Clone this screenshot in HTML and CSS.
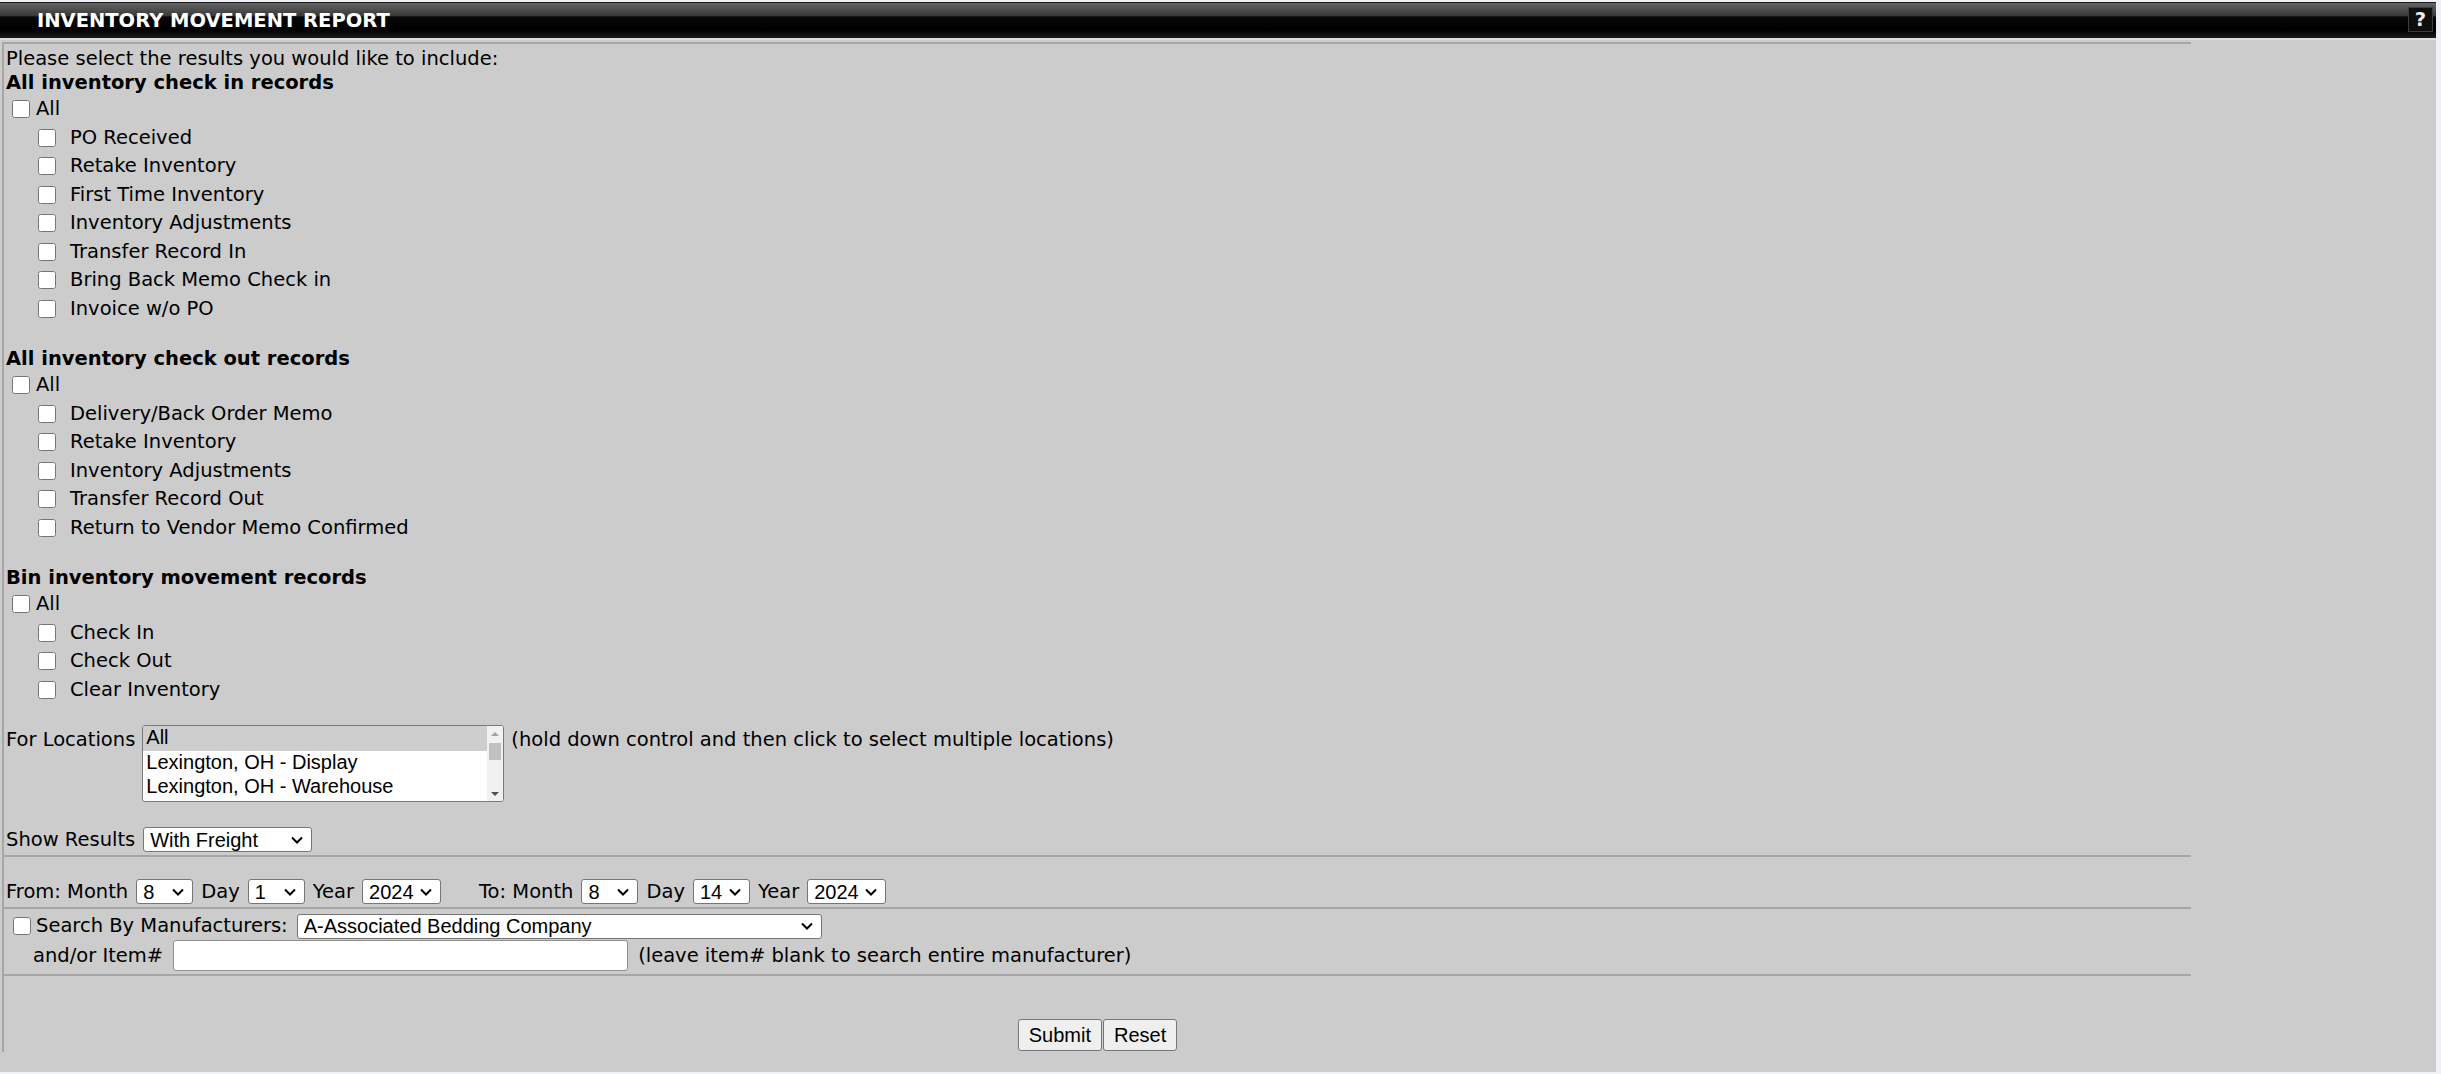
FILE: index.html
```html
<!DOCTYPE html>
<html lang="en">
<head>
    <meta charset="UTF-8">
    <meta name="viewport" content="width=device-width, initial-scale=1.0">
    <title>Inventory Movement Report</title>
    <link rel="stylesheet" href="styles.css">
</head>
<body>
    <div class="page">
        <!-- Title bar -->
        <header class="title-bar">
            <h1>INVENTORY MOVEMENT REPORT</h1>
            <a href="#" class="help-btn" title="Help">?</a>
        </header>

        <div class="panel">
            <form class="report-form">
                <!-- Record types -->
                <section class="form-row record-types">
                    <div class="intro">Please select the results you would like to include:</div>

                    <div class="group-title first">All inventory check in records</div>
                    <label class="check-all"><input type="checkbox" name="in_all">All</label>
                    <ul class="check-list">
                        <li><label><input type="checkbox" name="in_po"><span>PO Received</span></label></li>
                        <li><label><input type="checkbox" name="in_retake"><span>Retake Inventory</span></label></li>
                        <li><label><input type="checkbox" name="in_first"><span>First Time Inventory</span></label></li>
                        <li><label><input type="checkbox" name="in_adjust"><span>Inventory Adjustments</span></label></li>
                        <li><label><input type="checkbox" name="in_transfer"><span>Transfer Record In</span></label></li>
                        <li><label><input type="checkbox" name="in_bringback"><span>Bring Back Memo Check in</span></label></li>
                        <li><label><input type="checkbox" name="in_invoice"><span>Invoice w/o PO</span></label></li>
                    </ul>

                    <div class="group-title">All inventory check out records</div>
                    <label class="check-all"><input type="checkbox" name="out_all">All</label>
                    <ul class="check-list">
                        <li><label><input type="checkbox" name="out_delivery"><span>Delivery/Back Order Memo</span></label></li>
                        <li><label><input type="checkbox" name="out_retake"><span>Retake Inventory</span></label></li>
                        <li><label><input type="checkbox" name="out_adjust"><span>Inventory Adjustments</span></label></li>
                        <li><label><input type="checkbox" name="out_transfer"><span>Transfer Record Out</span></label></li>
                        <li><label><input type="checkbox" name="out_rtv"><span>Return to Vendor Memo Confirmed</span></label></li>
                    </ul>

                    <div class="group-title">Bin inventory movement records</div>
                    <label class="check-all"><input type="checkbox" name="bin_all">All</label>
                    <ul class="check-list">
                        <li><label><input type="checkbox" name="bin_in"><span>Check In</span></label></li>
                        <li><label><input type="checkbox" name="bin_out"><span>Check Out</span></label></li>
                        <li><label><input type="checkbox" name="bin_clear"><span>Clear Inventory</span></label></li>
                    </ul>

                    <div class="locations">
                        <span class="field-label">For Locations</span>
                        <div class="location-list" role="listbox" aria-multiselectable="true">
                            <div class="loc-options">
                                <div class="loc-option selected" role="option">All</div>
                                <div class="loc-option" role="option">Lexington, OH - Display</div>
                                <div class="loc-option" role="option">Lexington, OH - Warehouse</div>
                            </div>
                            <!-- scrollbar -->
                            <div class="list-scroll" aria-hidden="true">
                                <span class="sb-up"></span>
                                <span class="sb-track"><span class="sb-thumb"></span></span>
                                <span class="sb-down"></span>
                            </div>
                        </div>
                        <span class="field-label">(hold down control and then click to select multiple locations)</span>
                    </div>

                    <div class="show-results">
                        <span>Show Results</span>
                        <select class="freight-select" name="freight">
                            <option>With Freight</option>
                            <option>Without Freight</option>
                        </select>
                    </div>
                </section>

                <!-- Date range -->
                <section class="form-row date-range">
                    <span>From: Month</span>
                    <select class="sel-small" name="from_month">
                        <option>1</option><option>2</option><option>3</option><option>4</option><option>5</option><option>6</option>
                        <option>7</option><option selected>8</option><option>9</option><option>10</option><option>11</option><option>12</option>
                    </select>
                    <span>Day</span>
                    <select class="sel-small" name="from_day">
                        <option selected>1</option><option>2</option><option>3</option><option>4</option><option>5</option><option>6</option>
                        <option>7</option><option>8</option><option>9</option><option>10</option><option>11</option><option>12</option>
                        <option>13</option><option>14</option><option>15</option><option>16</option><option>17</option><option>18</option>
                        <option>19</option><option>20</option><option>21</option><option>22</option><option>23</option><option>24</option>
                        <option>25</option><option>26</option><option>27</option><option>28</option><option>29</option><option>30</option><option>31</option>
                    </select>
                    <span>Year</span>
                    <select class="sel-year" name="from_year">
                        <option>2022</option><option>2023</option><option selected>2024</option><option>2025</option>
                    </select>

                    <span class="to-label">To: Month</span>
                    <select class="sel-small" name="to_month">
                        <option>1</option><option>2</option><option>3</option><option>4</option><option>5</option><option>6</option>
                        <option>7</option><option selected>8</option><option>9</option><option>10</option><option>11</option><option>12</option>
                    </select>
                    <span>Day</span>
                    <select class="sel-small" name="to_day">
                        <option>1</option><option>2</option><option>3</option><option>4</option><option>5</option><option>6</option>
                        <option>7</option><option>8</option><option>9</option><option>10</option><option>11</option><option>12</option>
                        <option>13</option><option selected>14</option><option>15</option><option>16</option><option>17</option><option>18</option>
                        <option>19</option><option>20</option><option>21</option><option>22</option><option>23</option><option>24</option>
                        <option>25</option><option>26</option><option>27</option><option>28</option><option>29</option><option>30</option><option>31</option>
                    </select>
                    <span>Year</span>
                    <select class="sel-year" name="to_year">
                        <option>2022</option><option>2023</option><option selected>2024</option><option>2025</option>
                    </select>
                </section>

                <!-- Manufacturer / item -->
                <section class="form-row manufacturer">
                    <div class="mfr-line">
                        <label class="check-inline"><input type="checkbox" name="by_mfr">Search By Manufacturers:</label>
                        <select class="mfr-select" name="manufacturer">
                            <option>A-Associated Bedding Company</option>
                        </select>
                    </div>
                    <div class="item-line">
                        <span>and/or Item#</span>
                        <input type="text" class="item-input" name="item">
                        <span>(leave item# blank to search entire manufacturer)</span>
                    </div>
                </section>

                <!-- Actions -->
                <section class="form-row actions">
                    <button type="submit">Submit</button>
                    <button type="reset">Reset</button>
                </section>
            </form>
        </div>
    </div>
</body>
</html>
```

FILE: styles.css
```css
/* Global */
body {
    margin: 0;
    background-color: #f0f0f8;
    font-family: Verdana, 'DejaVu Sans', sans-serif;
    font-size: 19.5px;
    line-height: 24px;
    color: #000;
}

.page {
    width: 2436px;
    padding-top: 2px;
}

/* Title bar */
.title-bar {
    display: flex;
    justify-content: space-between;
    align-items: flex-start;
    height: 35px;
    padding: 0 3px 0 37px;
    border-top: 1px solid #1a1a1a;
    background: linear-gradient(to bottom, #646464 0%, #3a3a3a 36%, #070707 40%, #000 78%, #1c1c1c 100%);
}

.title-bar h1 {
    margin: 0;
    font-size: 19.5px;
    line-height: 35px;
    color: #fff;
}

.help-btn {
    margin-top: 4px;
    width: 23px;
    height: 23px;
    border: 1px solid #3c3c3c;
    background-color: #0e0e0e;
    color: #ececec;
    font-weight: bold;
    text-align: center;
    line-height: 23px;
    text-decoration: none;
}

/* Panel + form table */
.panel {
    background-color: #cbcccb;
    border-top: 2px solid #dcdddc;
    padding: 2px 0 20px 0;
}

.report-form {
    margin-left: 2px;
    width: 2187px;
    border-top: 2px solid #a6a6a6;
    border-left: 2px solid #a6a6a6;
}

.form-row {
    padding: 0 2px;
    border-bottom: 2px solid #a6a6a6;
}

.form-row.actions {
    border-bottom: none;
}

/* Record type checkboxes */
.record-types {
    padding-top: 3px;
}

.group-title {
    font-weight: bold;
    margin-top: 24px;
}

.group-title.first {
    margin-top: 0;
}

input[type="checkbox"] {
    width: 18px;
    height: 18px;
    margin: 0 6px 0 6px;
}

.check-all,
.check-list label {
    display: flex;
    align-items: center;
    height: 28.5px;
}

.check-list {
    list-style: none;
    margin: 0;
    padding: 0 0 0 26px;
}

.check-list label span {
    margin-left: 8px;
}

/* Locations */
.locations {
    display: flex;
    align-items: flex-start;
    gap: 7px;
    margin-top: 21px;
}

.locations .field-label {
    margin-top: 3px;
}

select,
button,
input[type="text"] {
    font-family: Arial, 'Liberation Sans', sans-serif;
    font-size: 20px;
    color: #000;
}

.location-list {
    display: flex;
    box-sizing: border-box;
    width: 362px;
    height: 77px;
    border: 1px solid #7a7a7a;
    border-radius: 3px;
    background-color: #fff;
    overflow: hidden;
    font-family: Arial, 'Liberation Sans', sans-serif;
    font-size: 20px;
    line-height: 23px;
    cursor: default;
}

.loc-options {
    flex: 1;
}

.loc-option {
    padding: 0 3px 1.5px;
    white-space: nowrap;
}

.loc-option.selected {
    background-color: #cecece;
}

/* listbox scrollbar */
.list-scroll {
    display: flex;
    flex-direction: column;
    width: 16px;
    background-color: #f1f1f1;
}

.sb-up,
.sb-down {
    display: flex;
    justify-content: center;
    align-items: center;
    height: 15px;
}

.sb-up::before {
    content: "";
    border-left: 4px solid transparent;
    border-right: 4px solid transparent;
    border-bottom: 4px solid #a3a3a3;
}

.sb-down::before {
    content: "";
    border-left: 4px solid transparent;
    border-right: 4px solid transparent;
    border-top: 4px solid #505050;
}

.sb-track {
    flex: 1;
    padding: 2px 2px 0;
}

.sb-thumb {
    display: block;
    height: 17px;
    background-color: #c1c1c1;
}

.show-results {
    display: flex;
    align-items: center;
    gap: 8px;
    height: 25px;
    margin-top: 25px;
    padding-bottom: 3px;
}

/* Dropdowns */
select {
    -webkit-appearance: none;
    appearance: none;
    height: 25px;
    padding: 0 0 0 6px;
    border: 1px solid #767676;
    border-radius: 3px;
    background: #fff url("data:image/svg+xml,%3Csvg xmlns='http://www.w3.org/2000/svg' viewBox='0 0 12 8'%3E%3Cpath d='M1 1.5 L6 6.5 L11 1.5' fill='none' stroke='%23000' stroke-width='2'/%3E%3C/svg%3E") no-repeat right 8px center;
    background-size: 12px 8px;
}

.freight-select {
    width: 169px;
}

/* Date range */
.date-range {
    display: flex;
    align-items: center;
    gap: 8px;
    height: 25px;
    padding-top: 22px;
    padding-bottom: 3px;
}

.sel-small {
    width: 57px;
}

.sel-year {
    width: 79px;
}

.to-label {
    margin-left: 30px;
}

/* Manufacturer */
.manufacturer {
    padding-top: 3px;
    padding-bottom: 3px;
}

.mfr-line {
    display: flex;
    align-items: center;
    gap: 9px;
    height: 28px;
}

.check-inline {
    display: flex;
    align-items: center;
}

.check-inline input[type="checkbox"] {
    margin-left: 7px;
    margin-right: 5px;
}

.mfr-select {
    width: 525px;
}

.item-line {
    display: flex;
    align-items: center;
    gap: 10px;
    height: 31px;
    padding-left: 27px;
}

.item-input {
    width: 455px;
    height: 31px;
    box-sizing: border-box;
    border: 1px solid #8f8f8f;
    border-radius: 3px;
    background-color: #fff;
}

/* Buttons */
.actions {
    display: flex;
    justify-content: center;
    gap: 1px;
    padding-top: 43px;
    padding-bottom: 1px;
}

.actions button {
    height: 32px;
    padding: 0 10px;
    background-color: #efefef;
    border: 1px solid #767676;
    border-radius: 3px;
}
```
